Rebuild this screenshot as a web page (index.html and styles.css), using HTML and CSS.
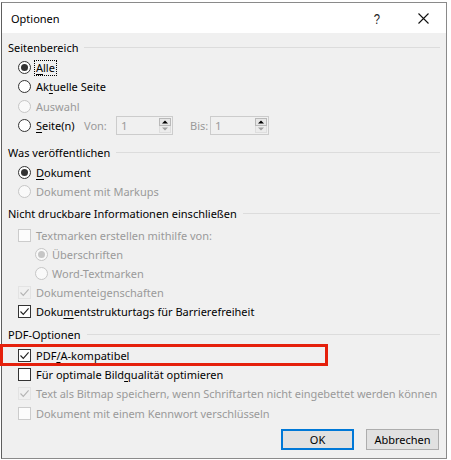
FILE: index.html
```html
<!DOCTYPE html>
<html lang="de">
<head>
<meta charset="utf-8">
<title>Optionen</title>
<link rel="stylesheet" href="styles.css">
</head>
<body>
<div class="screen">
  <div class="dialog">
    <div class="titlebar">
      <span class="title">Optionen</span>
      <span class="tb-btn help">?</span>
      <span class="tb-btn close"><svg width="11" height="11" viewBox="0 0 11 11"><path d="M0.5 0.5L10.5 10.5M10.5 0.5L0.5 10.5" stroke="#111" stroke-width="1.1" fill="none"/></svg></span>
    </div>
    <div class="content">
      <section class="group g1">
        <div class="glabel"><span>Seitenbereich</span><i class="gline"></i></div>
        <div class="row"><span class="radio on"></span><span class="lbl focus"><u>A</u>lle</span></div>
        <div class="row"><span class="radio"></span><span class="lbl">Ak<u>t</u>uelle Seite</span></div>
        <div class="row dis"><span class="radio"></span><span class="lbl">Auswahl</span></div>
        <div class="row spin-row">
          <span class="radio"></span><span class="lbl w-seite"><u>S</u>eite(n)</span>
          <span class="spin-lbl von">Von:</span>
          <span class="spin"><span class="spin-val">1</span><span class="spin-btns"><span class="sb up"></span><span class="sb down"></span></span></span>
          <span class="spin-lbl bis">Bis:</span>
          <span class="spin wide"><span class="spin-val">1</span><span class="spin-btns"><span class="sb up"></span><span class="sb down"></span></span></span>
        </div>
      </section>

      <section class="group g2">
        <div class="glabel"><span>Was veröffentlichen</span><i class="gline"></i></div>
        <div class="row"><span class="radio on"></span><span class="lbl"><u>D</u>okument</span></div>
        <div class="row dis"><span class="radio"></span><span class="lbl">Dokument mit Markups</span></div>
      </section>

      <section class="group g3">
        <div class="glabel"><span>Nicht druckbare Informationen einschließen</span><i class="gline"></i></div>
        <div class="row tight first dis"><span class="check"></span><span class="lbl">Textmarken erstellen mithilfe von:</span></div>
        <div class="row tight sub dis"><span class="radio on"></span><span class="lbl">Überschriften</span></div>
        <div class="row tight sub dis"><span class="radio"></span><span class="lbl">Word-Textmarken</span></div>
        <div class="row tight dis"><span class="check on"><svg viewBox="0 0 13 13"><path d="M2.5 6.5L5.3 9.4L10.6 3.4" fill="none" stroke-width="1.1"/></svg></span><span class="lbl">Dokumenteigenschaften</span></div>
        <div class="row tight"><span class="check on"><svg viewBox="0 0 13 13"><path d="M2.5 6.5L5.3 9.4L10.6 3.4" fill="none" stroke-width="1.1"/></svg></span><span class="lbl">Doku<u>m</u>entstrukturtags für Barrierefreiheit</span></div>
      </section>

      <section class="group g4">
        <div class="glabel"><span>PDF-Optionen</span><i class="gline"></i></div>
        <div class="row"><span class="check on"><svg viewBox="0 0 13 13"><path d="M2.5 6.5L5.3 9.4L10.6 3.4" fill="none" stroke-width="1.1"/></svg></span><span class="lbl">PDF<u>/</u>A-kompatibel</span></div>
        <div class="row"><span class="check"></span><span class="lbl">Für optimale Bild<u>q</u>ualität optimieren</span></div>
        <div class="row dis"><span class="check on"><svg viewBox="0 0 13 13"><path d="M2.5 6.5L5.3 9.4L10.6 3.4" fill="none" stroke-width="1.1"/></svg></span><span class="lbl">Text als Bitmap speichern, wenn Schriftarten nicht eingebettet werden können</span></div>
        <div class="row dis"><span class="check"></span><span class="lbl">Dokument mit einem Kennwort verschlüsseln</span></div>
      </section>

      <div class="footer">
        <button class="btn default">OK</button>
        <button class="btn">Abbrechen</button>
      </div>
    </div>
  </div>
  <div class="highlight"></div>
</div>
</body>
</html>
```

FILE: styles.css
```css
* { box-sizing: border-box; }
html, body { margin: 0; padding: 0; }
body {
  background: #ffffff;
  font-family: "Noto Sans", "Open Sans", sans-serif;
  font-size: 11px;
  color: #000;
  width: 451px;
  height: 460px;
  overflow: hidden;
}
.screen {
  position: relative;
  width: 451px;
  height: 460px;
  padding: 2px 0 0 1px;
}
.dialog {
  width: 446px;
  height: 457px;
  border: 1px solid #8a8a8a;
  border-left-color: #5e5e5e;
  background: #f0f0f0;
  display: flex;
  flex-direction: column;
}
.titlebar {
  height: 30px;
  background: #ffffff;
  display: flex;
  align-items: center;
  flex: none;
}
.title {
  flex: 1;
  padding-left: 9px;
  font-size: 11px;
}
.tb-btn {
  width: 46px;
  height: 30px;
  display: flex;
  align-items: center;
  justify-content: center;
}
.help {
  font-size: 15px;
  font-family: "Liberation Sans", sans-serif;
  color: #222;
  transform: scaleX(0.75);
}
.close svg { display: block; }

.content {
  flex: 1;
  padding: 4px 6px 0 6px;
  display: flex;
  flex-direction: column;
}
.glabel {
  height: 21px;
  display: flex;
  align-items: center;
  gap: 6px;
}
.gline {
  flex: 1;
  height: 1px;
  background: #dcdcdc;
}
.g3 { margin-top: 2px; }
.g4 { margin-top: 3px; }

.row {
  height: 19.3px;
  display: flex;
  align-items: center;
  padding-left: 10px;
}
.row.tight { height: 19px; }
.row.first { margin-top: 2px; }
.row.sub { padding-left: 27px; }
.row.sub .lbl { margin-left: 4px; }
.lbl { margin-left: 5px; white-space: nowrap; }
.lbl u { text-decoration-thickness: 1px; text-underline-offset: 2px; }
.focus {
  outline: 1px dotted #000;
  outline-offset: 0;
  padding: 0 1px;
  margin-left: 4px;
  line-height: 14px;
}
.dis .lbl, .dis { color: #9a9a9a; }
.g4 .dis .lbl { letter-spacing: -0.05px; }

.radio {
  width: 13px;
  height: 13px;
  border-radius: 50%;
  border: 1px solid #333;
  background: #fff;
  flex: none;
  display: flex;
  align-items: center;
  justify-content: center;
}
.radio.on::after {
  content: "";
  width: 7px;
  height: 7px;
  border-radius: 50%;
  background: #333;
}
.dis .radio { border-color: #c6c6c6; background: #f9f9f9; }
.dis .radio.on::after { background: #c6c6c6; }

.check {
  width: 13px;
  height: 13px;
  border: 1px solid #333;
  background: #fff;
  flex: none;
  position: relative;
}
.check svg {
  position: absolute;
  left: -1px;
  top: -1px;
  width: 13px;
  height: 13px;
  stroke: #222;
}
.dis .check { border-color: #cccccc; background: #fcfcfc; }
.dis .check svg { stroke: #b4b4b4; }
.dis .check.on { border-color: #e3e3e3; background: #f0f0f0; }

.spin-row { height: 20px; margin-bottom: 6px; }
.w-seite { width: 48px; }
.spin-lbl { color: #9a9a9a; white-space: nowrap; }
.von { width: 32px; margin-left: 0; }
.bis { width: 20px; margin-left: 17px; }
.spin {
  width: 57px;
  height: 19px;
  border: 1px solid #cccccc;
  background: #f0f0f0;
  display: flex;
  align-items: stretch;
  flex: none;
}
.spin.wide { width: 59px; }
.spin-val {
  flex: 1;
  color: #9a9a9a;
  padding-left: 4px;
  line-height: 17px;
  font-size: 11.5px;
}
.spin-btns {
  width: 13px;
  display: flex;
  flex-direction: column;
  padding: 1px 1px 1px 0;
}
.sb {
  flex: 1;
  position: relative;
}
.sb.up { border: 1px solid #b9b9b9; background: #e6e6e6; }
.sb.down { border: 1px solid #dedede; border-top: none; background: #ececec; }
.sb::after {
  content: "";
  position: absolute;
  left: 50%;
  top: 50%;
  transform: translate(-50%, -50%);
  border-left: 3px solid transparent;
  border-right: 3px solid transparent;
}
.sb.up::after { border-bottom: 3px solid #000; }
.sb.down::after { border-top: 3px solid #a0a0a0; }

.footer {
  margin-top: 6.5px;
  display: flex;
  justify-content: flex-end;
  gap: 12px;
  padding-right: 1px;
}
.btn {
  width: 73px;
  height: 21px;
  background: #e1e1e1;
  border: 1px solid #adadad;
  font-family: "Noto Sans", "Open Sans", sans-serif;
  font-size: 11px;
  color: #000;
  padding: 0;
  margin: 0;
}
.btn.default { border: 2px solid #0078d7; }

.highlight {
  position: absolute;
  left: 0;
  top: 344px;
  width: 328px;
  height: 22px;
  border: 3px solid #e5200c;
}
```
